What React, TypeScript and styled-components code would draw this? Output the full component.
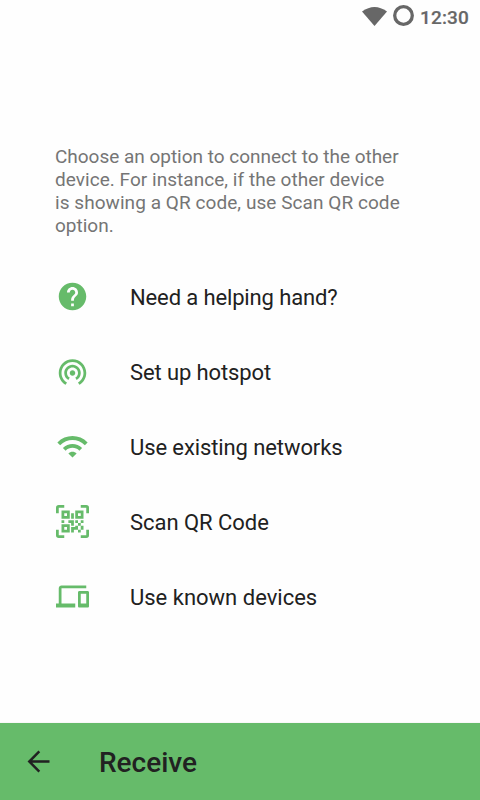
import React from "react";
import styled, { createGlobalStyle } from "styled-components";

const Global = createGlobalStyle`
  * { box-sizing: border-box; }
  body { margin: 0; background: #fefefe; font-family: Roboto, "Noto Sans", sans-serif; }
`;
const Screen = styled.div`
  width: 480px; height: 800px; display: flex; flex-direction: column; background: #fefefe; overflow: hidden;
`;
const StatusBar = styled.header`
  height: 36px; flex: none; display: flex; justify-content: flex-end; align-items: center;
  padding: 0 11px 2px 0; color: #676767; font-size: 19px; font-weight: 500;
`;
const StatusIcons = styled.svg`
  width: 54px; height: 34px; display: block;
`;
const Clock = styled.span`
  width: 53px; text-align: right; white-space: nowrap; letter-spacing: 0.15px; -webkit-text-stroke: 0.2px currentColor;
`;
const Content = styled.main`
  flex: 1; padding: 109px 55px 0;
`;
const Intro = styled.p`
  margin: 0; height: 92px; color: #757575; font-size: 19px; line-height: 23px;
`;
const IntroLine = styled.span<{ $spacing: number }>`
  display: block; white-space: nowrap; letter-spacing: ${(p) => p.$spacing}px;
`;
const Options = styled.nav`
  margin-top: 22px; display: flex; flex-direction: column;
`;
const Option = styled.button`
  height: 75px; padding: 0 0 0 1px; border: 0; background: none; display: flex; align-items: center;
  gap: 41px; color: #212121; text-align: left;
`;
const Label = styled.span<{ $spacing: number }>`
  padding-top: 2px; font: 400 22px Roboto, sans-serif; letter-spacing: ${(p) => p.$spacing}px; white-space: nowrap;
`;
const Icon = styled.svg`
  width: 33px; height: 33px; margin-bottom: 1px; flex: none; fill: #66bb6a;
`;
const BottomBar = styled.footer`
  height: 77px; flex: none; background: #66bb6a; display: flex; align-items: center; padding-left: 22px;
  gap: 44px; color: #212121; box-shadow: 0 0 1px rgba(0, 0, 0, 0.15);
`;
const BackIcon = styled.svg`
  width: 33px; height: 33px; fill: none; stroke: currentColor; stroke-width: 1.8;
`;
const Title = styled.h1`
  margin: 2px 0 0; font-size: 28px; font-weight: 500; line-height: 36px;
`;

const introLines = [
  { text: "Choose an option to connect to the other", spacing: -0.02 },
  { text: "device. For instance, if the other device", spacing: 0.04 },
  { text: "is showing a QR code, use Scan QR code", spacing: 0.06 },
  { text: "option.", spacing: 0 },
];

const options = [
  { label: "Need a helping hand?", spacing: -0.13, path: "M12 2C6.48 2 2 6.48 2 12s4.48 10 10 10 10-4.48 10-10S17.52 2 12 2zm1 17h-2v-2h2v2zm2.07-7.75l-.9.92C13.45 12.9 13 13.5 13 15h-2v-.5c0-1.1.45-2.1 1.17-2.83l1.24-1.26c.37-.36.59-.86.59-1.41 0-1.1-.9-2-2-2s-2 .9-2 2H8c0-2.21 1.79-4 4-4s4 1.79 4 4c0 .88-.36 1.68-.93 2.25z" },
  { label: "Set up hotspot", spacing: -0.12, path: "M12 11c-1.1 0-2 .9-2 2s.9 2 2 2 2-.9 2-2-.9-2-2-2zm6 2c0-3.31-2.69-6-6-6s-6 2.69-6 6c0 2.22 1.21 4.15 3 5.19l1-1.74c-1.19-.7-2-1.97-2-3.45 0-2.21 1.79-4 4-4s4 1.79 4 4c0 1.48-.81 2.75-2 3.45l1 1.74c1.79-1.04 3-2.97 3-5.19zM12 3C6.48 3 2 7.48 2 13c0 3.7 2.01 6.92 4.99 8.65l1-1.73C5.61 18.53 4 15.96 4 13c0-4.42 3.58-8 8-8s8 3.58 8 8c0 2.96-1.61 5.53-4 6.92l1 1.73c2.99-1.73 5-4.95 5-8.65 0-5.52-4.48-10-10-10z" },
  { label: "Use existing networks", spacing: -0.1, path: "M1 9l2 2c4.97-4.97 13.03-4.97 18 0l2-2C16.93 2.93 7.08 2.93 1 9zm8 8l3 3 3-3c-1.65-1.66-4.34-1.66-6 0zm-4-4l2 2c2.76-2.76 7.24-2.76 10 0l2-2C15.14 9.14 8.87 9.14 5 13z" },
  { label: "Scan QR Code", spacing: -0.03, path: "M4,4H10V10H4V4M20,4V10H14V4H20M14,15H16V13H14V11H16V13H18V11H20V13H18V15H20V18H18V20H16V18H13V20H11V16H14V15M16,15V18H18V15H16M4,20V14H10V20H4M6,6V8H8V6H6M16,6V8H18V6H16M6,16V18H8V16H6M4,11H6V13H4V11M9,11H13V15H11V13H9V11M11,6H13V10H11V6M2,2V6H0V2A2,2 0 0,1 2,0H6V2H2M22,0A2,2 0 0,1 24,2V6H22V2H18V0H22M2,18V22H6V24H2A2,2 0 0,1 0,22V18H2M22,22V18H24V22A2,2 0 0,1 22,24H18V22H22Z" },
  { label: "Use known devices", spacing: 0, path: "M4 6h18V4H4c-1.1 0-2 .9-2 2v11H0v3h14v-3H4V6zm19 2h-6c-.55 0-1 .45-1 1v10c0 .55.45 1 1 1h6c.55 0 1-.45 1-1V9c0-.55-.45-1-1-1zm-1 9h-4v-7h4v7z" },
];

export default function App() {
  return (
    <>
      <Global />
      <Screen>
        <StatusBar>
          <StatusIcons viewBox="0 0 54 34" aria-hidden="true">
            <path d="M0 11.5Q12.5 2.5 25 11.5L12.5 26Z" fill="#676767" />
            <circle cx="41.5" cy="15.5" r="8.8" fill="none" stroke="#676767" strokeWidth="3.3" />
          </StatusIcons>
          <Clock>12:30</Clock>
        </StatusBar>
        <Content>
          <Intro>
            {introLines.map((l) => (
              <IntroLine key={l.text} $spacing={l.spacing}>{l.text}</IntroLine>
            ))}
          </Intro>
          <Options>
            {options.map((o) => (
              <Option key={o.label}>
                <Icon viewBox="0 0 24 24" aria-hidden="true"><path d={o.path} /></Icon>
                <Label $spacing={o.spacing}>{o.label}</Label>
              </Option>
            ))}
          </Options>
        </Content>
        <BottomBar>
          <BackIcon viewBox="0 0 24 24" aria-hidden="true">
            <path d="M20 12H5.3M12.6 4.7L5.3 12l7.3 7.3" />
          </BackIcon>
          <Title>Receive</Title>
        </BottomBar>
      </Screen>
    </>
  );
}
